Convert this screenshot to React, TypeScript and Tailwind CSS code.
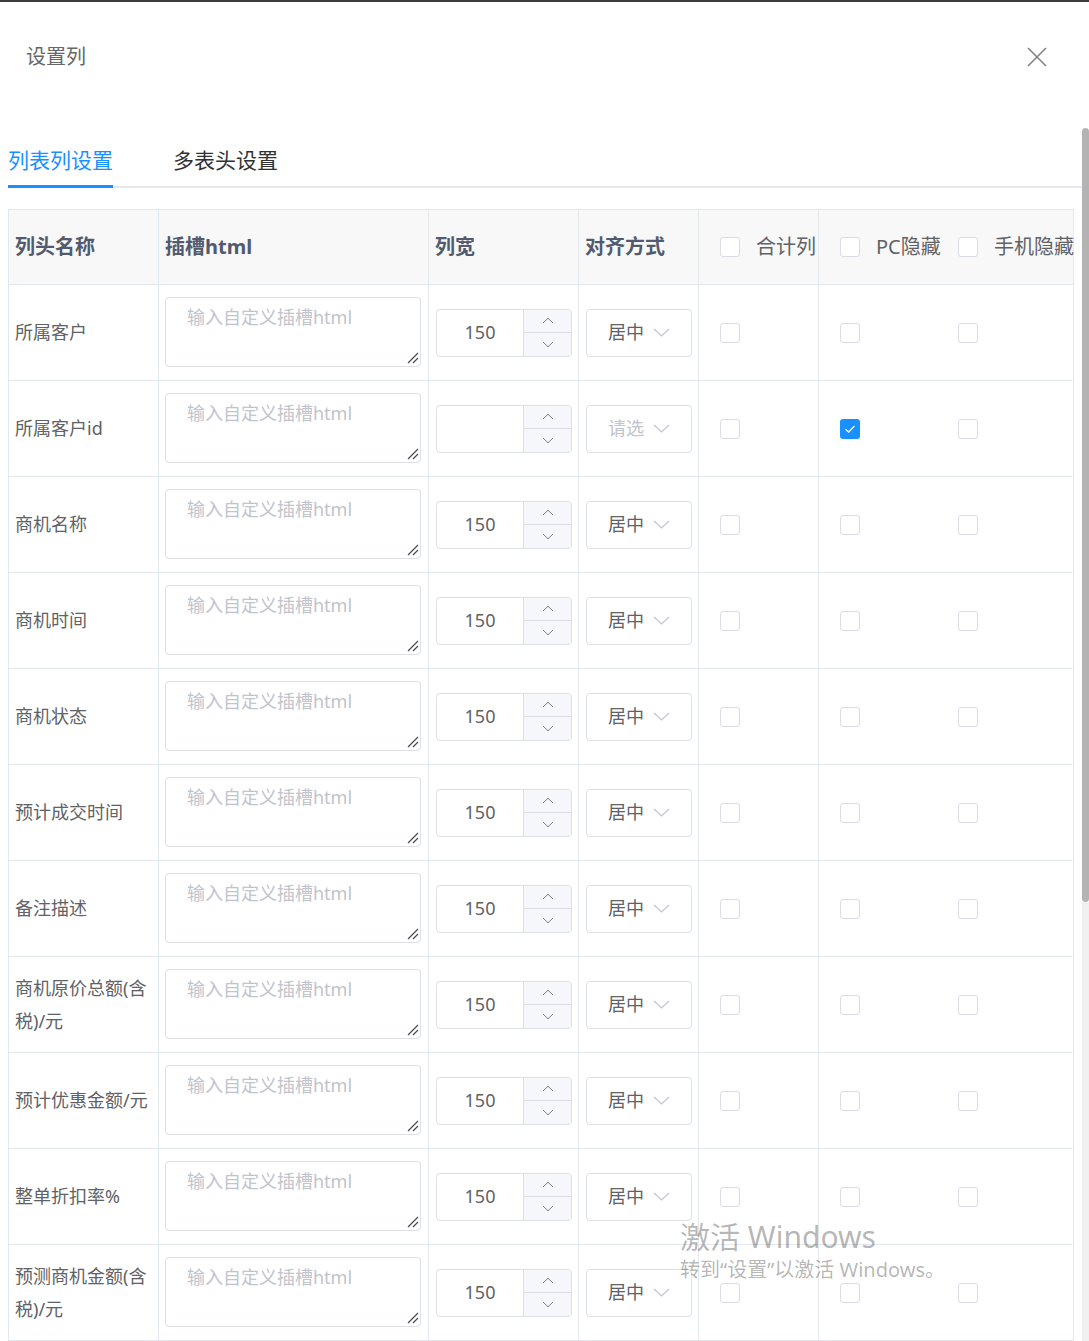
import React from 'react';

type ColumnRow = {
  name: string;
  width?: number;
  align?: string;
  pcHidden?: boolean;
};

const rows: ColumnRow[] = [
  { name: '所属客户', width: 150, align: '居中' },
  { name: '所属客户id', pcHidden: true },
  { name: '商机名称', width: 150, align: '居中' },
  { name: '商机时间', width: 150, align: '居中' },
  { name: '商机状态', width: 150, align: '居中' },
  { name: '预计成交时间', width: 150, align: '居中' },
  { name: '备注描述', width: 150, align: '居中' },
  { name: '商机原价总额(含税)/元', width: 150, align: '居中' },
  { name: '预计优惠金额/元', width: 150, align: '居中' },
  { name: '整单折扣率%', width: 150, align: '居中' },
  { name: '预测商机金额(含税)/元', width: 150, align: '居中' },
];

function Checkbox({ checked }: { checked?: boolean }) {
  if (checked) {
    return (
      <span className="flex h-[20px] w-[20px] shrink-0 items-center justify-center rounded-[3px] bg-[#1890ff]">
        <svg width="12" height="10" viewBox="0 0 12 10">
          <path d="M1.5 5.2 L4.6 8 L10.5 2" fill="none" stroke="#fff" strokeWidth="1.3" />
        </svg>
      </span>
    );
  }
  return <span className="block h-[20px] w-[20px] shrink-0 rounded-[3px] border border-[#d9dce3] bg-white" />;
}

function SlotTextarea() {
  return (
    <div className="relative h-[70px] w-[256px]">
      <textarea
        readOnly
        placeholder="输入自定义插槽html"
        className="block h-full w-full resize-none rounded-[4px] border border-[#dcdfe6] bg-white px-[21px] pt-[6px] text-[18px] leading-[26px] text-[#606266] outline-none placeholder:text-[#c0c4cc]"
      />
      {/* resize grip */}
      <svg className="pointer-events-none absolute bottom-[3px] right-[2px]" width="12" height="12" viewBox="0 0 12 12">
        <path d="M1 11 L11 1 M6 11 L11 6" stroke="#4a4a4a" strokeWidth="1.2" />
      </svg>
    </div>
  );
}

function NumberInput({ value }: { value?: number }) {
  return (
    <div className="flex h-[48px] w-[136px] overflow-hidden rounded-[4px] border border-[#dcdfe6] bg-white">
      <div className="flex flex-1 items-center justify-center text-[18px] text-[#606266]">{value ?? ''}</div>
      <div className="flex w-[48px] flex-col border-l border-[#dcdfe6] bg-[#f5f7fa]">
        <div className="flex flex-1 items-center justify-center border-b border-[#dcdfe6]">
          <svg width="12" height="7" viewBox="0 0 12 7">
            <path d="M1 6 L6 1.2 L11 6" fill="none" stroke="#7a7d82" strokeWidth="1" />
          </svg>
        </div>
        <div className="flex flex-1 items-center justify-center">
          <svg width="12" height="7" viewBox="0 0 12 7">
            <path d="M1 1 L6 5.8 L11 1" fill="none" stroke="#7a7d82" strokeWidth="1" />
          </svg>
        </div>
      </div>
    </div>
  );
}

function AlignSelect({ value }: { value?: string }) {
  return (
    <div className="flex h-[48px] w-[106px] items-center gap-[9px] rounded-[4px] border border-[#dcdfe6] bg-white pl-[21px]">
      <span className={value ? 'text-[18px] text-[#606266]' : 'text-[18px] text-[#c0c4cc]'}>{value || '请选'}</span>
      <svg width="17" height="9" viewBox="0 0 17 9">
        <path d="M1 1 L8.5 8 L16 1" fill="none" stroke="#c0c4cc" strokeWidth="1.2" />
      </svg>
    </div>
  );
}

export default function App() {
  return (
    <div className="relative h-[1341px] w-[1089px] overflow-hidden bg-white font-['Noto_Sans','Noto_Sans_CJK_SC',sans-serif]">
      <div className="h-[2px] bg-[#3d3d3d]" />

      <div className="flex h-[110px] items-center justify-between pl-[26px] pr-[42px]">
        <span className="text-[20px] leading-none text-[#666]">设置列</span>
        <svg width="20" height="20" viewBox="0 0 20 20">
          <path d="M1 1 L19 19 M19 1 L1 19" stroke="#7d7f82" strokeWidth="1.5" />
        </svg>
      </div>

      <div className="flex">
        <div className="min-w-0 flex-1 pl-[8px]">
          {/* tabs */}
          <div className="flex border-b-2 border-[#e4e7ed]">
            <div className="-mb-[2px] mr-[60px] flex h-[76px] items-center border-b-[3px] border-[#1890ff] pt-[23px] text-[21px] leading-none text-[#1890ff]">
              列表列设置
            </div>
            <div className="flex h-[74px] items-center pt-[23px] text-[21px] leading-none text-[#303133]">多表头设置</div>
          </div>

          {/* table */}
          <div className="mt-[21px] w-[1066px] border-l border-t border-[#e3e8ee]">
            <div className="grid grid-cols-[150px_270px_150px_120px_120px_120px_135px] bg-[#f8f8f9] text-[20px]">
              <div className="flex h-[75px] items-center border-b border-r border-[#e3e8ee] pl-[6px] font-bold text-[#515a6e]">列头名称</div>
              <div className="flex h-[75px] items-center border-b border-r border-[#e3e8ee] pl-[6px] font-bold text-[#515a6e]">插槽html</div>
              <div className="flex h-[75px] items-center border-b border-r border-[#e3e8ee] pl-[6px] font-bold text-[#515a6e]">列宽</div>
              <div className="flex h-[75px] items-center border-b border-r border-[#e3e8ee] pl-[6px] font-bold text-[#515a6e]">对齐方式</div>
              <div className="flex h-[75px] items-center gap-[16px] overflow-hidden whitespace-nowrap border-b border-r border-[#e3e8ee] pl-[21px] text-[#606266]">
                <Checkbox />
                <span>合计列</span>
              </div>
              <div className="flex h-[75px] items-center gap-[16px] whitespace-nowrap border-b border-[#e3e8ee] pl-[21px] text-[#606266]">
                <Checkbox />
                <span>PC隐藏</span>
              </div>
              <div className="flex h-[75px] items-center gap-[16px] whitespace-nowrap border-b border-r border-[#e3e8ee] pl-[19px] text-[#606266]">
                <Checkbox />
                <span>手机隐藏</span>
              </div>
            </div>

            {rows.map((row) => (
              <div key={row.name} className="grid grid-cols-[150px_270px_150px_120px_120px_120px_135px] text-[18px]">
                <div className="flex h-[96px] items-center border-b border-r border-[#e3e8ee] px-[6px] leading-[33px] text-[#606266]">
                  {row.name}
                </div>
                <div className="flex h-[96px] items-center border-b border-r border-[#e3e8ee] pb-[2px] pl-[6px]">
                  <SlotTextarea />
                </div>
                <div className="flex h-[96px] items-center border-b border-r border-[#e3e8ee] pl-[7px]">
                  <NumberInput value={row.width} />
                </div>
                <div className="flex h-[96px] items-center border-b border-r border-[#e3e8ee] pl-[7px]">
                  <AlignSelect value={row.align} />
                </div>
                <div className="flex h-[96px] items-center border-b border-r border-[#e3e8ee] pl-[21px]">
                  <Checkbox />
                </div>
                <div className="flex h-[96px] items-center border-b border-[#e3e8ee] pl-[21px]">
                  <Checkbox checked={row.pcHidden} />
                </div>
                <div className="flex h-[96px] items-center border-b border-r border-[#e3e8ee] pl-[19px]">
                  <Checkbox />
                </div>
              </div>
            ))}
          </div>
        </div>

        {/* scrollbar */}
        <div className="flex w-[7px] flex-col pt-[16px]">
          <div className="h-[774px] rounded-[4px] bg-[#b3b3b3]" />
          <div className="flex-1 bg-[#f0f0f0]" />
        </div>
      </div>

      {/* windows activation watermark */}
      <div className="pointer-events-none absolute left-[680px] top-[1218px] text-black/30">
        <div className="text-[30px] leading-[38px]">激活 Windows</div>
        <div className="text-[20px] leading-[28px]">转到“设置”以激活 Windows。</div>
      </div>
    </div>
  );
}
